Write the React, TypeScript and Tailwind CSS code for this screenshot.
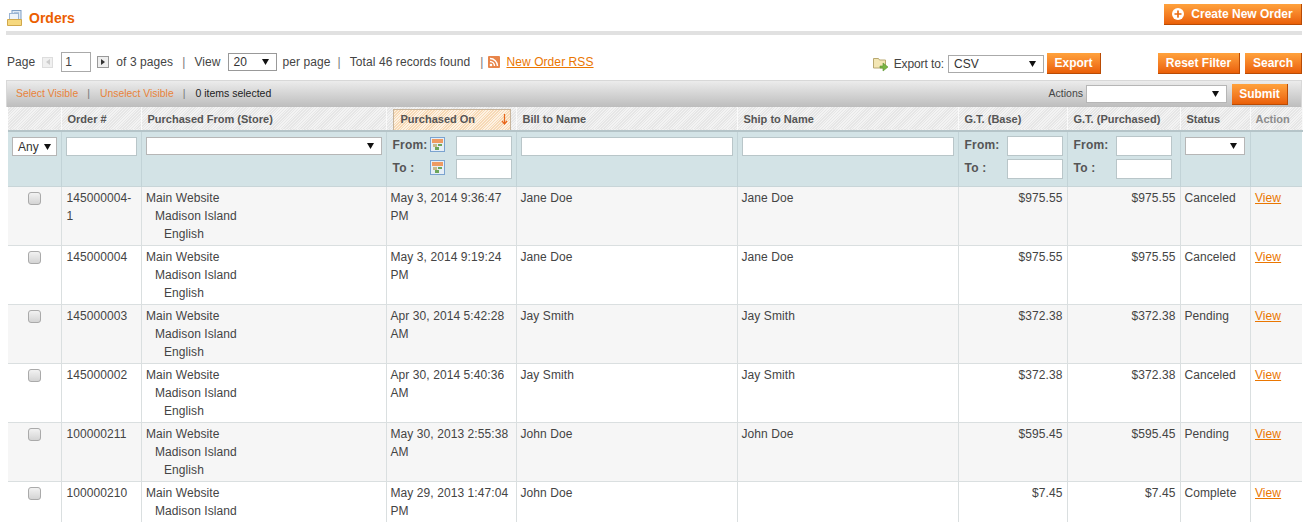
import { Plus } from "lucide-react";

const rows = [
  { id: ["145000004-", "1"], date: ["May 3, 2014 9:36:47", "PM"], bill: "Jane Doe", ship: "Jane Doe", total: "$975.55", status: "Canceled" },
  { id: ["145000004"], date: ["May 3, 2014 9:19:24", "PM"], bill: "Jane Doe", ship: "Jane Doe", total: "$975.55", status: "Canceled" },
  { id: ["145000003"], date: ["Apr 30, 2014 5:42:28", "AM"], bill: "Jay Smith", ship: "Jay Smith", total: "$372.38", status: "Pending" },
  { id: ["145000002"], date: ["Apr 30, 2014 5:40:36", "AM"], bill: "Jay Smith", ship: "Jay Smith", total: "$372.38", status: "Canceled" },
  { id: ["100000211"], date: ["May 30, 2013 2:55:38", "AM"], bill: "John Doe", ship: "John Doe", total: "$595.45", status: "Pending" },
  { id: ["100000210"], date: ["May 29, 2013 1:47:04", "PM"], bill: "John Doe", ship: "", total: "$7.45", status: "Complete" },
];

const headers = [
  { label: "", w: "w-[53px]" },
  { label: "Order #", w: "w-[80px]" },
  { label: "Purchased From (Store)", w: "w-[245px]" },
  { label: "Purchased On", w: "w-[130px]" },
  { label: "Bill to Name", w: "w-[221px]" },
  { label: "Ship to Name", w: "w-[221px]" },
  { label: "G.T. (Base)", w: "w-[109px]" },
  { label: "G.T. (Purchased)", w: "w-[113px]" },
  { label: "Status", w: "w-[70px]" },
  { label: "Action", w: "w-[52px]" },
];

const hatch =
  "bg-[repeating-linear-gradient(135deg,#e6e6e6_0px,#e6e6e6_1px,#f3f3f3_1px,#f3f3f3_2px)]";
const filterCell = "border-r border-[#c2d3d7] align-top p-0";
const bodyCell = "border-r border-[#dadfe0] align-top p-0 pt-[2px] leading-[18px]";

function Btn({ children, className = "" }: { children: React.ReactNode; className?: string }) {
  return (
    <button
      type="button"
      className={`h-[21px] bg-gradient-to-b from-[#ffa23c] to-[#ea5f06] border-r border-b border-[#b94b05] text-white font-bold text-[12px] tracking-normal flex items-center justify-center ${className}`}
    >
      {children}
    </button>
  );
}

function FakeSelect({ value = "", className = "" }: { value?: string; className?: string }) {
  return (
    <div className={`bg-white border border-[#b6b6b6] flex items-center justify-between pl-[5px] pr-[7px] text-[12px] text-[#333] ${className}`}>
      <span>{value}</span>
      <svg width="7" height="6" viewBox="0 0 7 6" className="shrink-0">
        <path d="M0 0h7L3.5 6z" fill="#111" />
      </svg>
    </div>
  );
}

function TextBox({ className = "" }: { className?: string }) {
  return <input type="text" className={`block bg-white border border-[#b9c6c9] outline-none ${className}`} />;
}

function CalendarIcon() {
  return (
    <svg width="15" height="15" viewBox="0 0 15 15" className="shrink-0">
      <rect x="0.5" y="0.5" width="14" height="14" fill="#e6eef6" stroke="#7ba3cf" />
      <rect x="2" y="2" width="11" height="4" fill="#ee9a62" />
      <rect x="3" y="7" width="4" height="3" fill="#c9b98a" />
      <rect x="8" y="7" width="4" height="2" fill="#6ea65a" />
      <rect x="5" y="10" width="4" height="3" fill="#6ea65a" />
    </svg>
  );
}

function RangeFilter({ calendar = false, pr = "pr-[4px]" }: { calendar?: boolean; pr?: string }) {
  return (
    <div className={`flex flex-col gap-[3px] pt-[4px] pl-[6px] ${pr} text-[12px] font-bold text-[#555] tracking-[0.2px]`}>
      {["From:", "To :"].map((label) => (
        <div key={label} className="flex justify-between h-[20px]">
          <span className="flex items-center gap-0 h-[17px]">
            <span className={calendar ? "w-[37px]" : ""}>{label}</span>
            {calendar && <CalendarIcon />}
          </span>
          <TextBox className="w-[56px] h-[20px]" />
        </div>
      ))}
    </div>
  );
}

export default function App() {
  return (
    <div className="w-[1315px] h-[522px] overflow-hidden bg-white pl-[6px] font-['Liberation_Sans',Arial,sans-serif] text-[12px] text-[#444] tracking-[0.08px]">
      <div className="w-[1296px]">
        <div className="flex items-start justify-between h-[31px]">
          <div className="flex items-center gap-[6px] pt-[8px] pl-[1px]">
            <svg width="16" height="17" viewBox="0 0 16 17">
              <rect x="5" y="0.5" width="9" height="11" fill="#dfe9f4" stroke="#7f9fc5" />
              <path d="M7 3h5M7 5h5M7 7h5" stroke="#7f9fc5" />
              <rect x="2.5" y="3.5" width="9" height="10" fill="#eef3f8" stroke="#9ab4d2" />
              <path d="M0.5 9.5h14v6h-14z" fill="#f6d87e" stroke="#d0a84c" />
            </svg>
            <h1 className="text-[14px] font-bold text-[#eb5e00] tracking-normal">Orders</h1>
          </div>
          <Btn className="mt-[4px] w-[138px] gap-[7px] tracking-[0.05px]">
            <span className="w-[12px] h-[12px] rounded-full bg-white flex items-center justify-center">
              <Plus size={10} strokeWidth={4} className="text-[#ea6a10]" />
            </span>
            Create New Order
          </Btn>
        </div>
        <div className="h-[4px] bg-[#e1e1e1]" />

        <div className="flex items-start justify-between h-[45px] pt-[18px] pl-[1px]">
          <div className="flex items-center h-[20px] -translate-y-[1px]">
            <span>Page</span>
            <span className="ml-[7px] w-[11px] h-[11px] bg-[#f0f0f0] border border-[#ddd] flex items-center justify-center">
              <svg width="4" height="6" viewBox="0 0 4 6"><path d="M4 0v6L0 3z" fill="#ccc" /></svg>
            </span>
            <input type="text" readOnly value="1" className="ml-[8px] w-[30px] h-[20px] border border-[#aaa] pl-[3px] outline-none" />
            <span className="ml-[6px] w-[12px] h-[12px] bg-[#eee] border border-[#999] flex items-center justify-center">
              <svg width="4" height="6" viewBox="0 0 4 6"><path d="M0 0v6l4-3z" fill="#333" /></svg>
            </span>
            <span className="ml-[7px]">of 3 pages</span>
            <span className="ml-[9px] text-[#777]">|</span>
            <span className="ml-[9px]">View</span>
            <FakeSelect value="20" className="ml-[7px] w-[49px] h-[18px] !border-[#999]" />
            <span className="ml-[6px]">per page</span>
            <span className="ml-[7px] text-[#777]">|</span>
            <span className="ml-[9px]">Total 46 records found</span>
            <span className="ml-[10px] text-[#777]">|</span>
            <svg width="12" height="12" viewBox="0 0 12 12" className="ml-[5px]">
              <rect width="12" height="12" rx="1" fill="#e8854a" />
              <circle cx="3" cy="9" r="1.3" fill="#fff" />
              <path d="M2 5.5a4.5 4.5 0 0 1 4.5 4.5M2 2.5A7.5 7.5 0 0 1 9.5 10" fill="none" stroke="#fff" strokeWidth="1.4" />
            </svg>
            <a className="ml-[6px] text-[#ea7601] underline">New Order RSS</a>
          </div>
          <div className="flex items-center h-[21px]">
            <svg width="16" height="15" viewBox="0 0 16 15" className="mr-[5px] mt-[2px]">
              <path d="M0.5 1.5h5l1 1.5h6v8h-12z" fill="#f3e6b4" stroke="#b8a870" />
              <path d="M7 9h3V6l5 4-5 4v-3H7z" fill="#7ab544" stroke="#5a9430" strokeWidth="0.6" />
            </svg>
            <span className="tracking-[-0.1px]">Export to:</span>
            <FakeSelect value="CSV" className="ml-[4px] w-[96px] h-[18px] !border-[#aaa]" />
            <Btn className="ml-[3px] w-[54px]">Export</Btn>
            <Btn className="ml-[57px] w-[82px]">Reset Filter</Btn>
            <Btn className="ml-[5px] w-[57px]">Search</Btn>
          </div>
        </div>

        <div className="h-[27px] border border-b-0 border-[#d8d8d8] bg-gradient-to-b from-[#ececec] to-[#bdbdbd] flex items-center justify-between pl-[9px] pr-[13px] text-[10.5px] tracking-normal">
          <div className="flex items-center">
            <a className="text-[#e8833a] text-[10.4px]">Select Visible</a>
            <span className="ml-[9px] mr-[10px] text-[#777]">|</span>
            <a className="text-[#e8833a] text-[10.4px]">Unselect Visible</a>
            <span className="ml-[9px] mr-[10px] text-[#777]">|</span>
            <span className="text-[#222]">0 items selected</span>
          </div>
          <div className="flex items-center">
            <span className="text-[#444]">Actions</span>
            <FakeSelect className="ml-[3px] w-[141px] h-[18px]" />
            <Btn className="ml-[5px] w-[56px] h-[20px]">Submit</Btn>
          </div>
        </div>

        <table className="w-[1294px] ml-[2px] table-fixed border-collapse">
          <colgroup>
            {headers.map((h) => (
              <col key={h.label} className={h.w} />
            ))}
          </colgroup>
          <thead>
            <tr className={`h-[24px] border-b-2 border-[#b5c4c8] ${hatch}`}>
              {headers.map((h, i) => (
                <th
                  key={h.label}
                  className={`border-r border-[#fafafa] text-left font-bold text-[11px] tracking-normal p-0 pt-[1px] ${
                    i === 9 ? "text-[#8c8c8c] pl-[5px]" : i === 3 ? "text-[#555] pl-[5px]" : "text-[#555] pl-[6px]"
                  }`}
                >
                  {i === 3 ? (
                    <div className="ml-[1px] mr-[5px] h-[21px] border border-[#c8b59c] border-b-0 bg-[repeating-linear-gradient(135deg,#f7d9b5_0px,#f7d9b5_1px,#fdf2e3_1px,#fdf2e3_2px)] flex items-center justify-between pl-[7px] pr-[2px]">
                      <span>Purchased On</span>
                      <svg width="7" height="11" viewBox="0 0 7 11">
                        <path d="M3.5 0v10M1 7l2.5 3L6 7" fill="none" stroke="#e8661a" strokeWidth="1.2" />
                      </svg>
                    </div>
                  ) : (
                    h.label
                  )}
                </th>
              ))}
            </tr>
          </thead>
          <tbody>
            <tr className="h-[55px] bg-[#d3e3e6] border-b border-[#c8d5d8]">
              <td className={filterCell}>
                <FakeSelect value="Any" className="mt-[5px] ml-[4px] w-[45px] h-[19px] !pr-[5px]" />
              </td>
              <td className={filterCell}>
                <TextBox className="mt-[5px] ml-[4px] w-[71px] h-[19px]" />
              </td>
              <td className={filterCell}>
                <FakeSelect className="mt-[5px] ml-[4px] w-[236px] h-[18px]" />
              </td>
              <td className={filterCell}>
                <RangeFilter calendar />
              </td>
              <td className={filterCell}>
                <TextBox className="mt-[5px] ml-[4px] w-[212px] h-[19px]" />
              </td>
              <td className={filterCell}>
                <TextBox className="mt-[5px] ml-[4px] w-[212px] h-[19px]" />
              </td>
              <td className={filterCell}>
                <RangeFilter />
              </td>
              <td className={filterCell}>
                <RangeFilter pr="pr-[8px]" />
              </td>
              <td className={filterCell}>
                <FakeSelect className="mt-[5px] ml-[4px] w-[60px] h-[18px]" />
              </td>
              <td className="p-0" />
            </tr>
            {rows.map((r, i) => (
              <tr key={r.id.join("")} className={`h-[59px] border-b border-[#dadfe0] ${i % 2 === 0 ? "bg-[#f6f6f6]" : "bg-white"}`}>
                <td className="border-r border-[#dadfe0] align-top text-center p-0 pt-[5px]">
                  <input type="checkbox" className="w-[13px] h-[13px] appearance-none rounded-[3px] border border-[#aaa] bg-gradient-to-b from-[#f2f2f2] to-[#d4d4d4]" />
                </td>
                <td className={`${bodyCell} pl-[5px]`}>
                  {r.id.map((l) => (
                    <div key={l}>{l}</div>
                  ))}
                </td>
                <td className={`${bodyCell} pl-[4.5px]`}>
                  <div>Main Website</div>
                  <div className="pl-[9px]">Madison Island</div>
                  <div className="pl-[18px]">English</div>
                </td>
                <td className={`${bodyCell} pl-[4px]`}>
                  {r.date.map((l) => (
                    <div key={l} className="whitespace-nowrap">{l}</div>
                  ))}
                </td>
                <td className={`${bodyCell} pl-[4px]`}>{r.bill}</td>
                <td className={`${bodyCell} pl-[4px]`}>{r.ship}</td>
                <td className={`${bodyCell} text-right pr-[4px]`}>{r.total}</td>
                <td className={`${bodyCell} text-right pr-[4px]`}>{r.total}</td>
                <td className={`${bodyCell} pl-[4px]`}>{r.status}</td>
                <td className="align-top p-0 pl-[4.5px] pt-[2px] leading-[18px]">
                  <a className="text-[#ea7601] underline">View</a>
                </td>
              </tr>
            ))}
          </tbody>
        </table>
      </div>
    </div>
  );
}
